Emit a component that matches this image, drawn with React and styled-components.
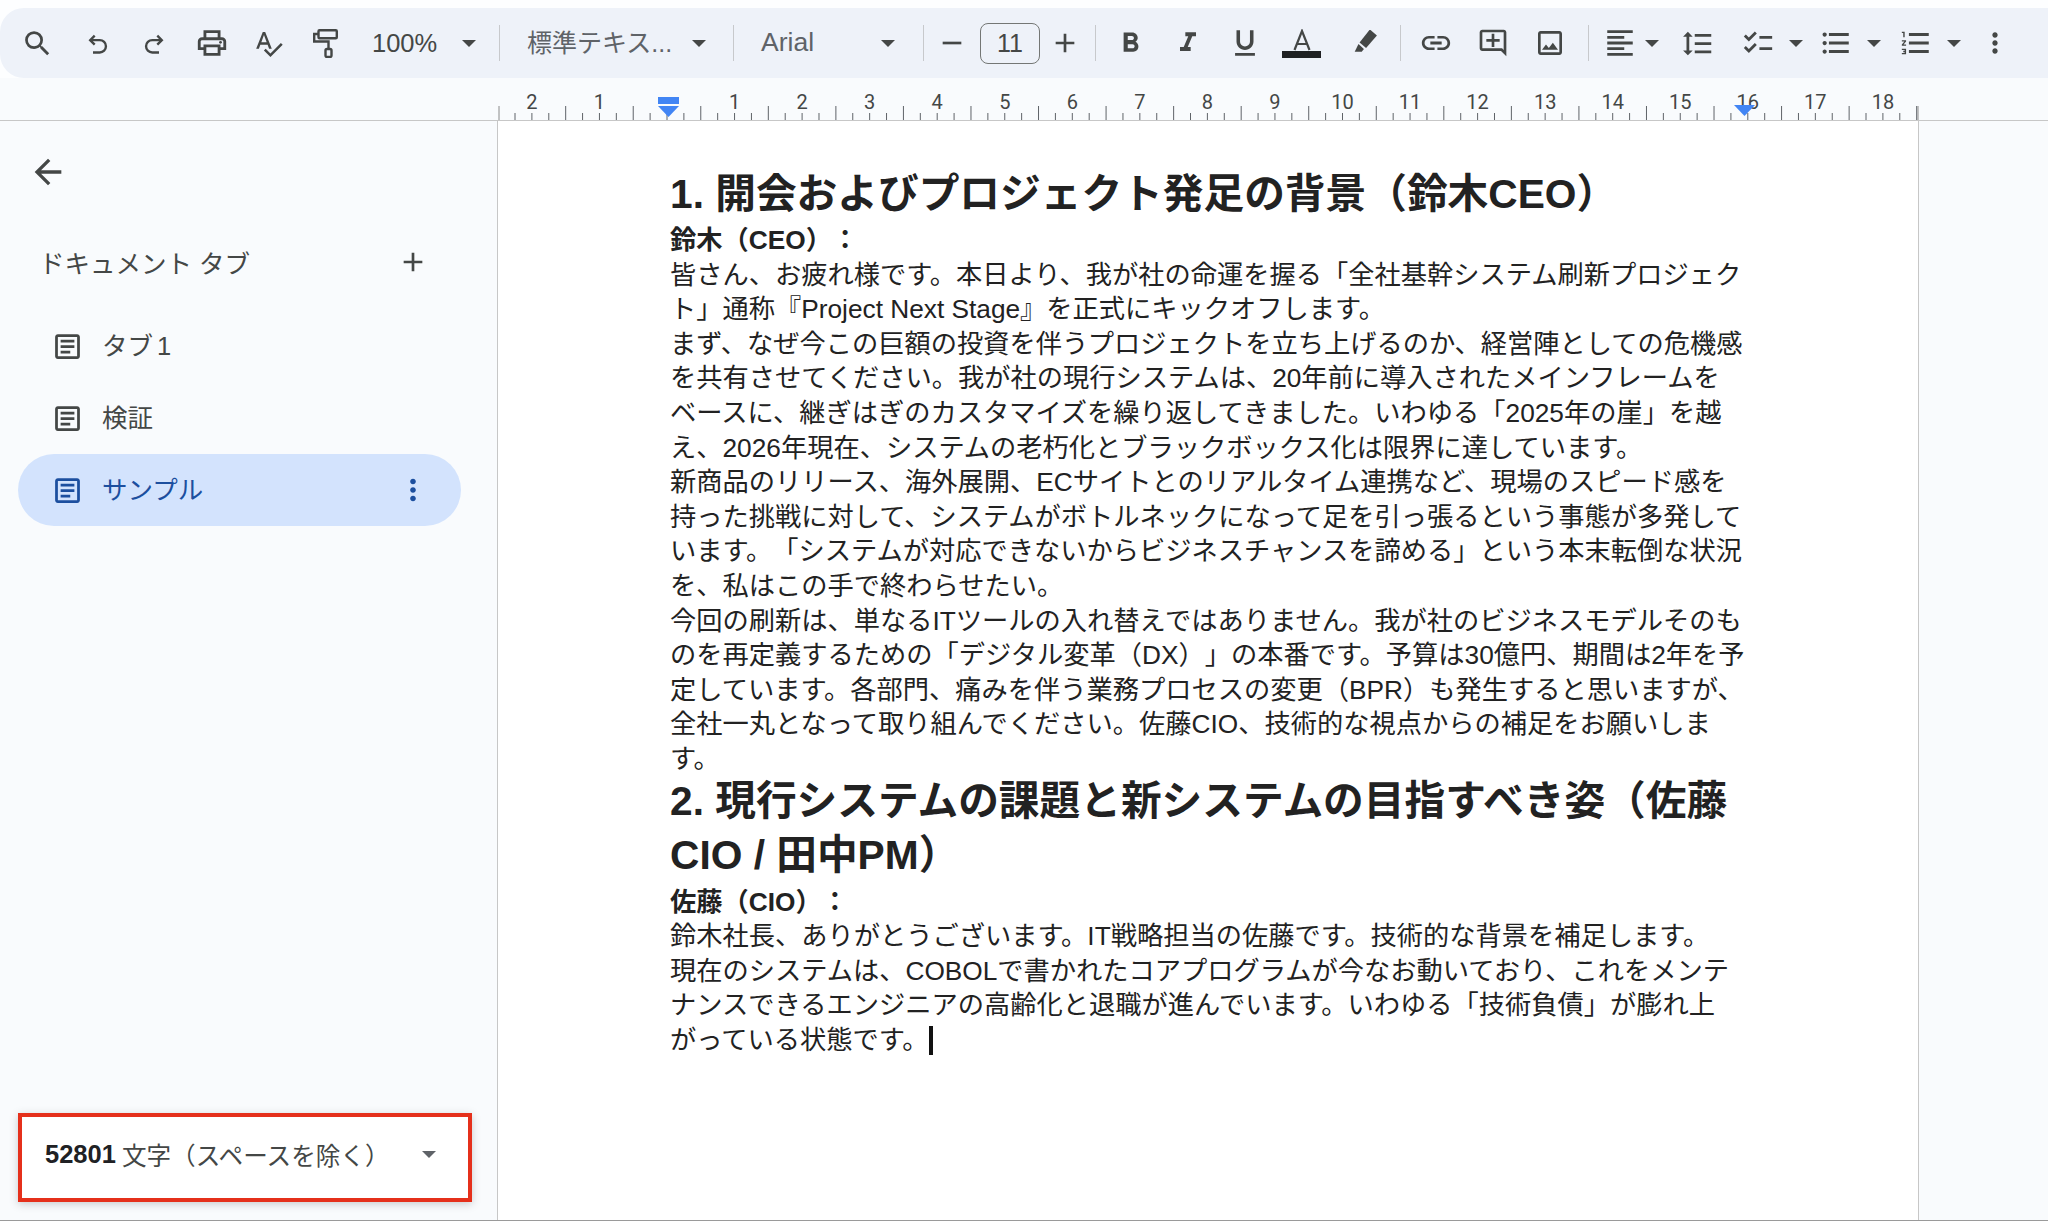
import React from 'react';
import styled, { createGlobalStyle } from 'styled-components';
import {
  MdSearch, MdOutlinePrint, MdSpellcheck, MdFormatBold, MdFormatItalic,
  MdFormatUnderlined, MdLink, MdOutlineAddComment, MdOutlineImage, MdFormatAlignLeft,
  MdFormatLineSpacing, MdChecklist, MdFormatListBulleted, MdFormatListNumbered, MdMoreVert,
  MdArrowBack, MdAdd, MdRemove, MdOutlineArticle,
} from 'react-icons/md';

const UI = `"Liberation Sans", Roboto, "Noto Sans CJK JP", sans-serif`;
const DOC = `"Liberation Sans", "Noto Sans CJK JP", sans-serif`;

const Global = createGlobalStyle`
  html, body { margin: 0; padding: 0; background: #fdfeff; }
  body { font-family: ${UI}; color: #444746; overflow: hidden; text-spacing-trim: space-all; }
`;

const Page = styled.div`
  width: 2048px;
  height: 1221px;
  display: flex;
  flex-direction: column;
  padding-top: 8px;
  box-sizing: border-box;
  overflow: hidden;
`;

const Toolbar = styled.div`
  height: 70px;
  flex: none;
  display: flex;
  align-items: center;
  background: #eef2f9;
  border-radius: 24px 0 0 24px;
  padding-left: 9px;
`;

const Slot = styled.div`
  flex: none;
  width: ${(p) => p.$w || 57}px;
  margin-left: ${(p) => p.$ml || 0}px;
  height: 40px;
  display: flex;
  align-items: center;
  justify-content: center;
  color: #444746;
  svg { display: block; }
`;

const Sep = styled.div`
  flex: none;
  width: 1px;
  height: 36px;
  margin-left: ${(p) => p.$ml || 0}px;
  background: #c7c9cc;
`;

const Drop = styled.div`
  flex: none;
  box-sizing: border-box;
  width: ${(p) => p.$w}px;
  padding: 0 ${(p) => p.$pr}px 0 ${(p) => p.$pl}px;
  display: flex;
  align-items: center;
  justify-content: space-between;
  font-size: ${(p) => p.$fs || 25.5}px;
  color: ${(p) => (p.$dim ? '#5f6368' : '#444746')};
  white-space: nowrap;
`;

const DropText = styled.span`
  display: block;
  margin-top: ${(p) => p.$lift || 0}px;
`;

const Caret = styled.span`
  flex: none;
  display: block;
  width: 0;
  height: 0;
  margin-left: ${(p) => p.$ml || 0}px;
  border-left: 7px solid transparent;
  border-right: 7px solid transparent;
  border-top: 7px solid ${(p) => p.$color || '#444746'};
`;

const IconDrop = styled.div`
  flex: none;
  display: flex;
  align-items: center;
  margin-left: ${(p) => p.$ml || 0}px;
  svg { display: block; color: #444746; }
`;

const SizeBox = styled.div`
  flex: none;
  box-sizing: border-box;
  width: 60px;
  height: 41px;
  margin-left: 1px;
  border: 1.5px solid #747775;
  border-radius: 8px;
  display: flex;
  align-items: center;
  justify-content: center;
  font-size: 25px;
  color: #444746;
`;

const ColorA = styled.div`
  flex: none;
  width: 57px;
  display: flex;
  flex-direction: column;
  align-items: center;
  svg { display: block; }
`;

const ColorBar = styled.div`
  width: 39px;
  height: 7px;
  background: #1f2123;
`;

const RulerRow = styled.div`
  height: 43px;
  flex: none;
  background: #f9fbfd;
  border-bottom: 1.5px solid #c7c7c7;
  box-sizing: border-box;
  svg { display: block; }
`;

const Main = styled.div`
  flex: 1;
  min-height: 0;
  display: flex;
  background: #f9fbfd;
  border-bottom: 1.5px solid #9a9a9a;
`;

const Sidebar = styled.aside`
  flex: none;
  width: 498px;
  box-sizing: border-box;
  border-right: 1.5px solid #c7c7c7;
  display: flex;
  flex-direction: column;
  padding: 0 0 18px 18px;
`;

const Back = styled.div`
  height: 30px;
  margin: 36px 0 0 10px;
  color: #444746;
  display: flex;
  align-items: center;
  svg { display: block; }
`;

const TabsHeader = styled.div`
  display: flex;
  align-items: center;
  justify-content: space-between;
  height: 40px;
  margin: 55px 68px 0 21px;
  font-size: 25.5px;
  color: #444746;
  white-space: nowrap;
  svg { display: block; }
`;

const HeaderText = styled.span`
  display: block;
  margin-top: -2px;
`;

const TabList = styled.div`
  margin-top: 28px;
  display: flex;
  flex-direction: column;
`;

const Tab = styled.div`
  width: 443px;
  height: 72px;
  box-sizing: border-box;
  border-radius: 36px;
  padding: 0 31px 0 33px;
  display: flex;
  align-items: center;
  gap: 18px;
  font-size: 25.5px;
  background: ${(p) => (p.$active ? '#d3e3fd' : 'transparent')};
  color: ${(p) => (p.$active ? '#1c4f9f' : '#444746')};
  svg { display: block; flex: none; }
`;

const TabLabel = styled.span`
  flex: 1;
  padding-bottom: 5px;
  word-spacing: -3px;
`;

const Spacer = styled.div`
  flex: 1;
`;

const WordCount = styled.div`
  width: 454px;
  height: 89px;
  box-sizing: border-box;
  border: 4px solid #e5301b;
  background: #fff;
  box-shadow: 0 2px 8px rgba(60, 64, 67, 0.25);
  display: flex;
  align-items: center;
  padding: 0 32px 6px 23px;
  font-size: 25.5px;
  color: #444746;
  white-space: nowrap;
`;

const Count = styled.b`
  font-weight: 700;
  color: #202124;
  margin-right: 6px;
`;

const CountLabel = styled.span`
  flex: 1;
  font-size: 24.6px;
  padding-bottom: 2px;
`;

const Doc = styled.main`
  flex: none;
  width: 1421px;
  box-sizing: border-box;
  background: #fff;
  border-right: 1.5px solid #c7c7c7;
  padding: 49px 0 0 172px;
  font-family: ${DOC};
  color: #222;
`;

const Heading = styled.h2`
  margin: -2.6px 0 1.6px;
  font-size: 40.7px;
  line-height: 54px;
  font-weight: 700;
  color: #222;
  font-family: ${DOC};
`;

const HeadingNext = styled(Heading)`
  margin: -2.6px 0 2.6px;
`;

const HeadLine = styled.div`
  height: 54px;
  white-space: nowrap;
`;

const Line = styled.div`
  height: 34.6px;
  line-height: 34.6px;
  font-size: 26.25px;
  white-space: nowrap;
  font-weight: ${(p) => (p.$bold ? 700 : 400)};
`;

const Cursor = styled.span`
  display: inline-block;
  width: 4px;
  height: 29px;
  margin-left: 0;
  background: #111;
  vertical-align: -6px;
`;

function Undo({ flip }) {
  return (
    <svg width="27" height="27" viewBox="0 0 24 24" fill="none" stroke="#444746" strokeWidth="2.1"
      style={flip ? { transform: 'scaleX(-1)' } : undefined}>
      <path d="M9.500 5 5.500 9 9.500 13" />
      <path d="M5.500 9H14a5 5 0 0 1 0 11H8" />
    </svg>
  );
}

function Roller() {
  return (
    <svg width="25" height="29" viewBox="0 0 25 29" fill="none" stroke="#444746" strokeWidth="2.4">
      <rect x="5.500" y="1.200" width="18.300" height="8" rx="1" />
      <path d="M5.500 5H1.200V12.500H15.500V20" />
      <rect x="12.500" y="20" width="6" height="8" rx="1.500" />
    </svg>
  );
}

function Pen() {
  return (
    <svg width="26" height="26" viewBox="0 2 24 24" fill="#444746">
      <path d="M16.500 1.500 23 7 13 18.500l-6-5z" />
      <path d="M6 15l5 4.500-2 2.500H2.500z" />
    </svg>
  );
}

function LetterA() {
  return (
    <svg width="20" height="22" viewBox="0 0 20 22" fill="none" stroke="#444746" strokeWidth="2.2">
      <path d="M2.500 21 10 2l7.500 19M5 15h10" />
    </svg>
  );
}

function Ruler() {
  const cm = 67.55;
  const zero = 667;
  const ticks = [];
  for (let i = 0; i < 200; i++) {
    const x = zero - 2.5 * cm + (i * cm) / 4;
    if (x > 1917) break;
    if (x < 500) continue;
    const long = i % 4 === 0;
    ticks.push(<line key={i} x1={x} x2={x} y1={long ? 28 : 35} y2={42} stroke="#5f6368" strokeWidth="1" />);
  }
  const nums = [];
  for (let n = -2; n <= 18; n++) {
    if (n === 0) continue;
    nums.push(
      <text key={n} x={zero + n * cm} y={31} textAnchor="middle" fontSize="20" fontFamily="Roboto, sans-serif" fill="#444746">
        {Math.abs(n)}
      </text>
    );
  }
  return (
    <svg width="2048" height="42" viewBox="0 0 2048 42">
      {ticks}
      <line x1="499" x2="499" y1="28" y2="42" stroke="#8a8a8a" />
      <line x1="1918" x2="1918" y1="28" y2="42" stroke="#8a8a8a" />
      {nums}
      <rect x="658" y="19" width="21" height="7" fill="#4285f4" />
      <path d="M658 28h21l-10.500 11z" fill="#4285f4" />
      <path d="M1734 27h21l-10.500 11z" fill="#4285f4" />
    </svg>
  );
}

export default function App() {
  return (
    <Page>
      <Global />
      <Toolbar>
        <Slot><MdSearch size={33} /></Slot>
        <Slot $ml={3}><Undo /></Slot>
        <Slot><Undo flip /></Slot>
        <Slot><MdOutlinePrint size={34} /></Slot>
        <Slot><MdSpellcheck size={31} /></Slot>
        <Slot><Roller /></Slot>
        <Drop $w={145} $pl={18} $pr={23}>100%<Caret /></Drop>
        <Sep />
        <Drop $w={233} $pl={27} $pr={27} $dim $fs={25}><DropText $lift={-5}>標準テキス...</DropText><Caret /></Drop>
        <Sep />
        <Drop $w={189} $pl={27} $pr={28} $dim $fs={26.500}><DropText $lift={-2}>Arial</DropText><Caret /></Drop>
        <Sep />
        <Slot $w={55}><MdRemove size={32} /></Slot>
        <SizeBox>11</SizeBox>
        <Slot $w={50}><MdAdd size={32} /></Slot>
        <Sep $ml={5} />
        <Slot $ml={6}><MdFormatBold size={33} /></Slot>
        <Slot><MdFormatItalic size={32} /></Slot>
        <Slot><MdFormatUnderlined size={34} /></Slot>
        <ColorA><LetterA /><ColorBar /></ColorA>
        <Slot $w={69}><Pen /></Slot>
        <Sep $ml={1} />
        <Slot $ml={6}><MdLink size={34} /></Slot>
        <Slot><MdOutlineAddComment size={32} /></Slot>
        <Slot><MdOutlineImage size={32} /></Slot>
        <Sep $ml={10} />
        <IconDrop $ml={14}><MdFormatAlignLeft size={34} /><Caret $ml={8} /></IconDrop>
        <Slot $ml={9} $w={58}><MdFormatLineSpacing size={33} /></Slot>
        <IconDrop $ml={15}><MdChecklist size={34} /><Caret $ml={14} /></IconDrop>
        <IconDrop $ml={16}><MdFormatListBulleted size={34} /><Caret $ml={14} /></IconDrop>
        <IconDrop $ml={18}><MdFormatListNumbered size={34} /><Caret $ml={14} /></IconDrop>
        <Slot $ml={5} $w={57}><MdMoreVert size={32} /></Slot>
      </Toolbar>
      <RulerRow><Ruler /></RulerRow>
      <Main>
        <Sidebar>
          <Back><MdArrowBack size={40} /></Back>
          <TabsHeader><HeaderText>ドキュメント タブ</HeaderText><MdAdd size={32} /></TabsHeader>
          <TabList>
            <Tab><MdOutlineArticle size={33} /><TabLabel>タブ 1</TabLabel></Tab>
            <Tab><MdOutlineArticle size={33} /><TabLabel>検証</TabLabel></Tab>
            <Tab $active><MdOutlineArticle size={33} /><TabLabel>サンプル</TabLabel><MdMoreVert size={34} /></Tab>
          </TabList>
          <Spacer />
          <WordCount>
            <Count>52801</Count>
            <CountLabel>文字（スペースを除く）</CountLabel>
            <Caret $color="#5f6368" />
          </WordCount>
        </Sidebar>
        <Doc>
          <Heading><HeadLine>1. 開会およびプロジェクト発足の背景（鈴木CEO）</HeadLine></Heading>
          <Line $bold>鈴木（CEO）：</Line>
          <Line>皆さん、お疲れ様です。本日より、我が社の命運を握る「全社基幹システム刷新プロジェク</Line>
          <Line>ト」通称『Project Next Stage』を正式にキックオフします。</Line>
          <Line>まず、なぜ今この巨額の投資を伴うプロジェクトを立ち上げるのか、経営陣としての危機感</Line>
          <Line>を共有させてください。我が社の現行システムは、20年前に導入されたメインフレームを</Line>
          <Line>ベースに、継ぎはぎのカスタマイズを繰り返してきました。いわゆる「2025年の崖」を越</Line>
          <Line>え、2026年現在、システムの老朽化とブラックボックス化は限界に達しています。</Line>
          <Line>新商品のリリース、海外展開、ECサイトとのリアルタイム連携など、現場のスピード感を</Line>
          <Line>持った挑戦に対して、システムがボトルネックになって足を引っ張るという事態が多発して</Line>
          <Line>います。「システムが対応できないからビジネスチャンスを諦める」という本末転倒な状況</Line>
          <Line>を、私はこの手で終わらせたい。</Line>
          <Line>今回の刷新は、単なるITツールの入れ替えではありません。我が社のビジネスモデルそのも</Line>
          <Line>のを再定義するための「デジタル変革（DX）」の本番です。予算は30億円、期間は2年を予</Line>
          <Line>定しています。各部門、痛みを伴う業務プロセスの変更（BPR）も発生すると思いますが、</Line>
          <Line>全社一丸となって取り組んでください。佐藤CIO、技術的な視点からの補足をお願いしま</Line>
          <Line>す。</Line>
          <HeadingNext>
            <HeadLine>2. 現行システムの課題と新システムの目指すべき姿（佐藤</HeadLine>
            <HeadLine>CIO / 田中PM）</HeadLine>
          </HeadingNext>
          <Line $bold>佐藤（CIO）：</Line>
          <Line>鈴木社長、ありがとうございます。IT戦略担当の佐藤です。技術的な背景を補足します。</Line>
          <Line>現在のシステムは、COBOLで書かれたコアプログラムが今なお動いており、これをメンテ</Line>
          <Line>ナンスできるエンジニアの高齢化と退職が進んでいます。いわゆる「技術負債」が膨れ上</Line>
          <Line>がっている状態です。<Cursor /></Line>
        </Doc>
      </Main>
    </Page>
  );
}
